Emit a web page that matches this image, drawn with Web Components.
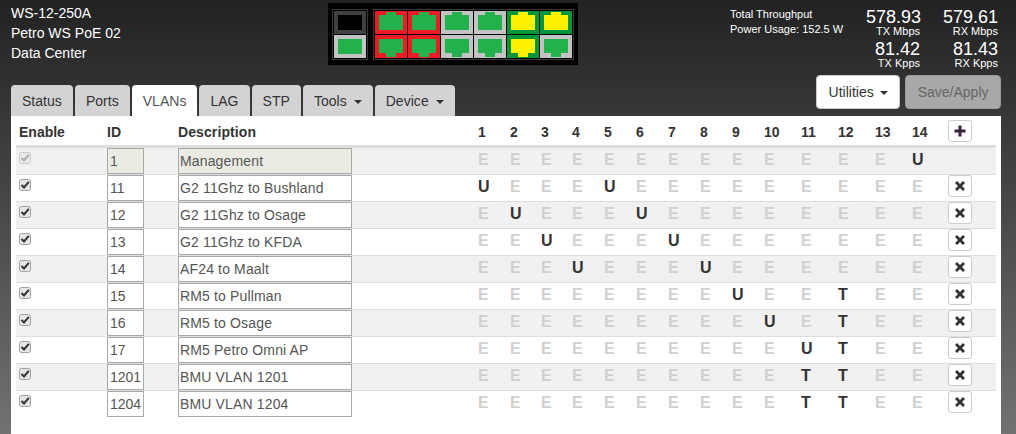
<!DOCTYPE html>
<html>
<head>
<meta charset="utf-8">
<title>WS-12-250A</title>
<style>
	html, body{
		margin: 0;
		height: 434px;
		overflow: hidden;
	}
	body{
		background: linear-gradient(#222222, #727272);
		font-family: "Liberation Sans", Arial, sans-serif;
		font-size: 14px;
		color: #333;
	}
</style>
</head>
<body>
<switch-page>
	<device-name slot="name">
		<div>WS-12-250A</div>
		<div>Petro WS PoE 02</div>
		<div>Data Center</div>
	</device-name>

	<port-map slot="ports">
		<port-group>
			<port-cell bg="#404040" fg="#000000" kind="sfp"></port-cell>
			<port-cell bg="#c3c3c3" fg="#22b14c" kind="sfp"></port-cell>
		</port-group>
		<port-group columns="6">
			<port-cell bg="#ed1c24" fg="#22b14c" kind="top"></port-cell>
			<port-cell bg="#ed1c24" fg="#22b14c" kind="top"></port-cell>
			<port-cell bg="#c3c3c3" fg="#22b14c" kind="top"></port-cell>
			<port-cell bg="#c3c3c3" fg="#22b14c" kind="top"></port-cell>
			<port-cell bg="#009639" fg="#fff200" kind="top"></port-cell>
			<port-cell bg="#009639" fg="#fff200" kind="top"></port-cell>
			<port-cell bg="#ed1c24" fg="#22b14c" kind="bottom"></port-cell>
			<port-cell bg="#ed1c24" fg="#22b14c" kind="bottom"></port-cell>
			<port-cell bg="#c3c3c3" fg="#22b14c" kind="bottom"></port-cell>
			<port-cell bg="#c3c3c3" fg="#22b14c" kind="bottom"></port-cell>
			<port-cell bg="#009639" fg="#fff200" kind="bottom"></port-cell>
			<port-cell bg="#c3c3c3" fg="#22b14c" kind="bottom"></port-cell>
		</port-group>
	</port-map>

	<through-put slot="stats" power="152.5"></through-put>

	<nav-tab slot="tabs">Status</nav-tab>
	<nav-tab slot="tabs">Ports</nav-tab>
	<nav-tab slot="tabs" active>VLANs</nav-tab>
	<nav-tab slot="tabs">LAG</nav-tab>
	<nav-tab slot="tabs">STP</nav-tab>
	<nav-tab slot="tabs" caret>Tools</nav-tab>
	<nav-tab slot="tabs" caret>Device</nav-tab>

	<action-button slot="actions" caret>Utilities</action-button>
	<action-button slot="actions" disabled>Save/Apply</action-button>

	<vlan-table slot="content">
		<vlan-row vid="1" ports=".............U" locked>Management</vlan-row>
		<vlan-row vid="11" ports="U...U.........">G2 11Ghz to Bushland</vlan-row>
		<vlan-row vid="12" ports=".U...U........" striped>G2 11Ghz to Osage</vlan-row>
		<vlan-row vid="13" ports="..U...U.......">G2 11Ghz to KFDA</vlan-row>
		<vlan-row vid="14" ports="...U...U......" striped>AF24 to Maalt</vlan-row>
		<vlan-row vid="15" ports="........U..T..">RM5 to Pullman</vlan-row>
		<vlan-row vid="16" ports=".........U.T.." striped>RM5 to Osage</vlan-row>
		<vlan-row vid="17" ports="..........UT..">RM5 Petro Omni AP</vlan-row>
		<vlan-row vid="1201" ports="..........TT.." striped>BMU VLAN 1201</vlan-row>
		<vlan-row vid="1204" ports="..........TT..">BMU VLAN 1204</vlan-row>
	</vlan-table>
</switch-page>

<script>
const GRID_COLUMNS = '88px 71px 300px 32px 31px 31px 32px 32px 32px 32px 32px 32px 37px 37px 37px 37px 36px 51px';

class SwitchPage extends HTMLElement {
	constructor(){
		super();
		this.shadow = this.attachShadow({mode : 'open'});
		this.shadow.innerHTML = `
			<style>
				:host{
					display: block;
					height: 434px;
				}
				.top{
					display: flex;
					height: 75px;
				}
				.name{ width: 328px; flex: none; }
				.ports{ flex: none; }
				.stats{ margin-left: auto; }
				.bar{
					display: flex;
					justify-content: space-between;
					height: 41px;
					padding: 0 15px 0 11px;
				}
				.tabs{
					display: flex;
					gap: 2px;
					align-self: flex-end;
				}
				.actions{
					display: flex;
					gap: 5px;
					align-self: flex-start;
				}
				.panel{
					height: 318px;
					margin: 0 15px 0 11px;
					padding: 0 5px;
					background: #fff;
				}
			</style>
			<div class="top">
				<div class="name"><slot name="name"></slot></div>
				<div class="ports"><slot name="ports"></slot></div>
				<div class="stats"><slot name="stats"></slot></div>
			</div>
			<div class="bar">
				<div class="tabs"><slot name="tabs"></slot></div>
				<div class="actions"><slot name="actions"></slot></div>
			</div>
			<div class="panel"><slot name="content"></slot></div>
		`;
	}
}

class DeviceName extends HTMLElement {
	constructor(){
		super();
		this.shadow = this.attachShadow({mode : 'open'});
		this.shadow.innerHTML = `
			<style>
				:host{
					display: block;
					padding: 3px 0 0 11px;
					color: #fff;
					font-size: 14px;
					line-height: 20px;
				}
			</style>
			<slot></slot>
		`;
	}
}

class PortMap extends HTMLElement {
	constructor(){
		super();
		this.shadow = this.attachShadow({mode : 'open'});
		this.shadow.innerHTML = `
			<style>
				:host{
					display: flex;
					gap: 5px;
					margin-top: 3px;
					padding: 6px 4px 5px;
					background: #000;
				}
			</style>
			<slot></slot>
		`;
	}
}

class PortGroup extends HTMLElement {
	constructor(){
		super();
		this.shadow = this.attachShadow({mode : 'open'});
		let cols = this.getAttribute('columns') || 1;
		this.shadow.innerHTML = `
			<style>
				:host{
					display: grid;
					grid-template-columns: repeat(${cols}, 32px);
					grid-auto-rows: 23px;
					gap: 1px;
					padding: 1px;
					border: 1px solid #3a3a3a;
				}
			</style>
			<slot></slot>
		`;
	}
}

class PortCell extends HTMLElement {
	constructor(){
		super();
		this.shadow = this.attachShadow({mode : 'open'});
	}

	connectedCallback(){
		let kind = this.getAttribute('kind');
		let points = '4,4 28,4 28,19 4,19';
		if(kind == 'top'){
			points = '4,4 11,4 11,1 21,1 21,4 28,4 28,19 4,19';
		}
		if(kind == 'bottom'){
			points = '4,4 28,4 28,18 21,18 21,22 11,22 11,18 4,18';
		}
		this.shadow.innerHTML = `
			<style>
				:host{ display: block; }
				svg{ display: block; }
			</style>
			<svg width="32" height="23" viewBox="0 0 32 23">
				<rect width="32" height="23" fill="${this.getAttribute('bg')}"/>
				<polygon points="${points}" fill="${this.getAttribute('fg')}"/>
			</svg>
		`;
	}
}

class ThroughPut extends HTMLElement {
	constructor(){
		super();
		this.shadow = this.attachShadow({mode : 'open'});
	}

	connectedCallback(){
		this.shadow.innerHTML = `
			<style>
				:host{
					display: flex;
					padding: 7px 18px 0 0;
					color: #fff;
				}
				.label{
					width: 136px;
					font-size: 11px;
					line-height: 15px;
				}
				.grid{
					display: grid;
					grid-template-columns: 54px 78px;
					grid-auto-rows: 32px;
					text-align: right;
				}
				.val{
					font-size: 18px;
					line-height: 20px;
				}
				.unit{
					margin-top: -1px;
					font-size: 11px;
					line-height: 11px;
				}
			</style>
			<div class="label">
				<div>Total Throughput</div>
				<div>Power Usage: ${this.getAttribute('power')} W</div>
			</div>
			<div class="grid">
				<div><div class="val">578.93</div><div class="unit">TX Mbps</div></div>
				<div><div class="val">579.61</div><div class="unit">RX Mbps</div></div>
				<div><div class="val">81.42</div><div class="unit">TX Kpps</div></div>
				<div><div class="val">81.43</div><div class="unit">RX Kpps</div></div>
			</div>
		`;
	}
}

class NavTab extends HTMLElement {
	constructor(){
		super();
		this.shadow = this.attachShadow({mode : 'open'});
		let caret = this.hasAttribute('caret') ? '<i></i>' : '';
		this.shadow.innerHTML = `
			<style>
				:host{
					display: block;
					height: 31px;
					box-sizing: border-box;
					padding: 6px 11px 0;
					border-radius: 4px 4px 0 0;
					background: #d3d3d3;
					color: #333;
					font-size: 14px;
					letter-spacing: .03px;
					line-height: 20px;
				}
				:host([active]){
					background: #fff;
					color: #555;
				}
				i{
					display: inline-block;
					margin-left: 7px;
					vertical-align: middle;
					border-top: 4px solid #333;
					border-left: 4px solid transparent;
					border-right: 4px solid transparent;
				}
			</style>
			<slot></slot>${caret}
		`;
	}
}

class ActionButton extends HTMLElement {
	constructor(){
		super();
		this.shadow = this.attachShadow({mode : 'open'});
		let caret = this.hasAttribute('caret') ? '<i></i>' : '';
		this.shadow.innerHTML = `
			<style>
				:host{
					display: block;
					height: 34px;
					box-sizing: border-box;
					padding: 6px 11.5px;
					border: 1px solid #ccc;
					border-radius: 4px;
					background: #fff;
					color: #333;
					font-size: 14px;
					line-height: 20px;
				}
				:host([disabled]){
					background: #a8a8a8;
					border-color: #999;
					color: #666;
				}
				i{
					display: inline-block;
					margin-left: 6px;
					vertical-align: middle;
					border-top: 4px solid #333;
					border-left: 4px solid transparent;
					border-right: 4px solid transparent;
				}
			</style>
			<slot></slot>${caret}
		`;
	}
}

class IconButton extends HTMLElement {
	constructor(){
		super();
		this.shadow = this.attachShadow({mode : 'open'});
	}

	connectedCallback(){
		let shape = 'M5.500 1.500h3v4h4v3h-4v4h-3v-4h-4v-3h4z';
		if(this.getAttribute('icon') == 'remove'){
			shape = 'M4 2 7 5 10 2 12 4 9 7 12 10 10 12 7 9 4 12 2 10 5 7 2 4z';
		}
		this.shadow.innerHTML = `
			<style>
				:host{
					display: flex;
					align-items: center;
					justify-content: center;
					width: 24px;
					height: 22px;
					box-sizing: border-box;
					border: 1px solid #ccc;
					border-radius: 3px;
					background: #fff;
				}
				svg{ display: block; }
			</style>
			<svg width="14" height="14" viewBox="0 0 14 14"><path d="${shape}" fill="${this.getAttribute('icon') == 'add' ? '#38203f' : '#333'}"/></svg>
		`;
	}
}

class VlanCheck extends HTMLElement {
	constructor(){
		super();
		this.shadow = this.attachShadow({mode : 'open'});
	}

	connectedCallback(){
		let off = this.hasAttribute('disabled');
		this.shadow.innerHTML = `
			<style>
				:host{
					display: block;
					width: 12px;
					height: 12px;
					margin: 4px 0 0 3px;
				}
				svg{ display: block; }
			</style>
			<svg width="12" height="12" viewBox="0 0 12 12">
				<rect x=".5" y=".5" width="11" height="11" rx="2" fill="${off ? '#eaeaea' : '#e6e6e6'}" stroke="${off ? '#c8c8c8' : '#a0a0a0'}"/>
				<path d="M2.500 6 5 8.500 9.800 2.800" fill="none" stroke="${off ? '#aaaaaa' : '#333333'}" stroke-width="2"/>
			</svg>
		`;
	}
}

class VlanTable extends HTMLElement {
	constructor(){
		super();
		this.shadow = this.attachShadow({mode : 'open'});
		let ports = '';
		for(let i = 1; i <= 14; i++){
			ports += `<div>${i}</div>`;
		}
		this.shadow.innerHTML = `
			<style>
				:host{
					display: block;
				}
				.head{
					display: grid;
					grid-template-columns: ${GRID_COLUMNS};
					height: 29px;
					border-bottom: 3px solid #ddd;
					color: #333;
					font-size: 14px;
					font-weight: bold;
					line-height: 32px;
				}
				.head div{
					padding-left: 3px;
				}
				.head .desc{
					letter-spacing: .1px;
				}
				.head .add{
					padding: 4px 0 0 3px;
				}
			</style>
			<div class="head">
				<div>Enable</div>
				<div>ID</div>
				<div class="desc">Description</div>
				${ports}
				<div class="add"><icon-button icon="add"></icon-button></div>
			</div>
			<slot></slot>
		`;
	}
}

class VlanRow extends HTMLElement {
	constructor(){
		super();
		this.shadow = this.attachShadow({mode : 'open'});
	}

	connectedCallback(){
		let locked = this.hasAttribute('locked');
		let ports = '';
		for(let p of this.getAttribute('ports')){
			ports += p == '.' ? '<div class="port">E</div>' : `<div class="port set">${p}</div>`;
		}
		let remove = locked ? '<div></div>' : '<div class="del"><icon-button icon="remove"></icon-button></div>';
		this.shadow.innerHTML = `
			<style>
				:host{
					display: grid;
					grid-template-columns: ${GRID_COLUMNS};
					height: 26px;
					border-top: 1px solid #ddd;
				}
				:host([locked]){
					height: 26px;
					border-top: 0;
					background: #f1f1f1;
				}
				:host([striped]){
					background: #f1f1f1;
				}
				.box{
					box-sizing: border-box;
					height: 26px;
					margin-left: 3px;
					border: 1px solid #a9a9a9;
					background: #fff;
					color: #555;
					font-size: 14px;
					line-height: 25px;
					white-space: nowrap;
				}
				.vid{
					width: 37px;
					padding-left: 2px;
				}
				.text{
					width: 174px;
					padding-left: 1px;
					letter-spacing: .15px;
				}
				:host([locked]) .box{
					background: #ebebe4;
				}
				.port{
					padding-left: 3px;
					color: #d0d0d0;
					font-size: 16px;
					font-weight: bold;
					line-height: 23px;
				}
				.set{
					color: #333;
				}
				.del{
					padding-left: 3px;
				}
			</style>
			<vlan-check ${locked ? 'disabled' : ''}></vlan-check>
			<div class="box vid">${this.getAttribute('vid')}</div>
			<div class="box text"><slot></slot></div>
			${ports}
			${remove}
		`;
	}
}

window.customElements.define('switch-page', SwitchPage);
window.customElements.define('device-name', DeviceName);
window.customElements.define('port-map', PortMap);
window.customElements.define('port-group', PortGroup);
window.customElements.define('port-cell', PortCell);
window.customElements.define('through-put', ThroughPut);
window.customElements.define('nav-tab', NavTab);
window.customElements.define('action-button', ActionButton);
window.customElements.define('icon-button', IconButton);
window.customElements.define('vlan-check', VlanCheck);
window.customElements.define('vlan-table', VlanTable);
window.customElements.define('vlan-row', VlanRow);
</script>
</body>
</html>
